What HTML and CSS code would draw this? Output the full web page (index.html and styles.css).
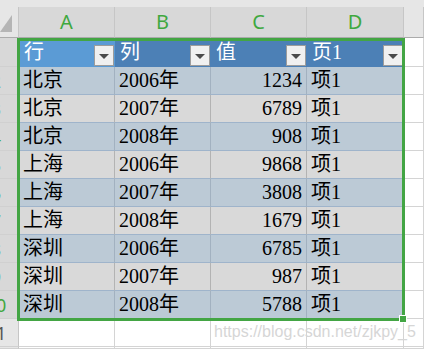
FILE: index.html
```html
<!DOCTYPE html>
<html lang="zh">
<head>
<meta charset="utf-8">
<link rel="stylesheet" href="styles.css">
</head>
<body>
<div class="sheet">
  <div class="topstrip"></div>

  <div class="corner"><svg class="corner-tri" width="13" height="26" viewBox="0 0 13 26"><polygon points="0,25 12,25 12,8" fill="#b5b5b5"/></svg></div>
  <div class="colhead sel">A</div>
  <div class="colhead sel">B</div>
  <div class="colhead sel">C</div>
  <div class="colhead sel">D</div>
  <div class="colhead"></div>

  <div class="rowhead sel"><span>1</span></div>
  <div class="th active"><span>行</span><i class="dd"></i></div>
  <div class="th"><span>列</span><i class="dd"></i></div>
  <div class="th"><span>值</span><i class="dd"></i></div>
  <div class="th"><span>页1</span><i class="dd"></i></div>
  <div class="ecell"></div>

  <div class="rowhead sel"><span>2</span></div>
  <div class="td band">北京</div><div class="td band">2006年</div><div class="td band num">1234</div><div class="td band">项1</div>
  <div class="ecell"></div>

  <div class="rowhead sel"><span>3</span></div>
  <div class="td">北京</div><div class="td">2007年</div><div class="td num">6789</div><div class="td">项1</div>
  <div class="ecell"></div>

  <div class="rowhead sel"><span>4</span></div>
  <div class="td band">北京</div><div class="td band">2008年</div><div class="td band num">908</div><div class="td band">项1</div>
  <div class="ecell"></div>

  <div class="rowhead sel"><span>5</span></div>
  <div class="td">上海</div><div class="td">2006年</div><div class="td num">9868</div><div class="td">项1</div>
  <div class="ecell"></div>

  <div class="rowhead sel"><span>6</span></div>
  <div class="td band">上海</div><div class="td band">2007年</div><div class="td band num">3808</div><div class="td band">项1</div>
  <div class="ecell"></div>

  <div class="rowhead sel"><span>7</span></div>
  <div class="td">上海</div><div class="td">2008年</div><div class="td num">1679</div><div class="td">项1</div>
  <div class="ecell"></div>

  <div class="rowhead sel"><span>8</span></div>
  <div class="td band">深圳</div><div class="td band">2006年</div><div class="td band num">6785</div><div class="td band">项1</div>
  <div class="ecell"></div>

  <div class="rowhead sel"><span>9</span></div>
  <div class="td">深圳</div><div class="td">2007年</div><div class="td num">987</div><div class="td">项1</div>
  <div class="ecell"></div>

  <div class="rowhead sel"><span>10</span></div>
  <div class="td band">深圳</div><div class="td band">2008年</div><div class="td band num">5788</div><div class="td band">项1</div>
  <div class="ecell"></div>

  <div class="rowhead"><span>11</span></div>
  <div class="ecell"></div><div class="ecell"></div><div class="ecell"></div><div class="ecell"></div><div class="ecell"></div>

  <div class="rowhead"></div>
  <div class="ecell"></div><div class="ecell"></div><div class="ecell"></div><div class="ecell"></div><div class="ecell"></div>

  <div class="selection"></div>
  <div class="handle"></div>
  <div class="watermark">https://blog.csdn.net/zjkpy_5</div>
</div>
</body>
</html>
```

FILE: styles.css
```css
* { box-sizing: border-box; }
html, body { margin: 0; padding: 0; background: #ffffff; }
body { width: 424px; height: 349px; overflow: hidden; }

.sheet {
  position: relative;
  width: 424px;
  height: 349px;
  display: grid;
  grid-template-columns: 19px 96px 96px 96px 97px 20px;
  grid-template-rows: 7px 31px 29px repeat(9, 28px) 28px 2px;
  overflow: hidden;
  font-family: "Liberation Serif", "Noto Sans CJK SC", serif;
}

.topstrip {
  grid-column: 1 / -1;
  background: #e6e6e6;
}

.corner {
  position: relative;
  background: #e6e6e6;
  border-right: 1px solid #c6c6c6;
  border-bottom: 1px solid #ababab;
}
.corner-tri { display: block; }

.colhead {
  background: #e6e6e6;
  border-right: 1px solid #c6c6c6;
  border-bottom: 1px solid #ababab;
  font-family: "Noto Sans", "Liberation Sans", sans-serif;
  font-size: 20px;
  line-height: 30px;
  text-align: center;
  color: #3fa83f;
}
.colhead.sel { background: #d8d8d8; }

.rowhead {
  overflow: hidden;
  background: #e6e6e6;
  border-right: 1px solid #c6c6c6;
  border-bottom: 1px solid #d0d0d0;
  font-family: "Noto Sans", "Liberation Sans", sans-serif;
  font-size: 18px;
  color: #555555;
  display: flex;
  align-items: center;
}
.rowhead span {
  flex: 0 0 40px;
  width: 40px;
  margin-left: -24px;
  text-align: center;
}
.rowhead.sel { background: #d8d8d8; color: #3fa83f; }

.th {
  background: #4c80b6;
  color: #ffffff;
  font-size: 20px;
  display: flex;
  justify-content: space-between;
  align-items: flex-end;
  padding-left: 5px;
  line-height: 26px;
  border-bottom: 1px solid #4c80b6;
}
.th.active { background: #5b9bd5; border-bottom-color: #5b9bd5; }
.th span { padding-bottom: 1px; }

.dd {
  flex: 0 0 20px;
  width: 20px;
  height: 21px;
  margin-right: 1px;
  margin-bottom: 0;
  background: #f0f0f0;
  border: 1px solid #9c9c9c;
  display: flex;
  align-items: center;
  justify-content: center;
}
.dd::after {
  content: "";
  width: 0;
  height: 0;
  border-left: 5px solid transparent;
  border-right: 5px solid transparent;
  border-top: 5px solid #4a4a4a;
  margin-top: 1px;
}

.td {
  background: #d9d9d9;
  color: #000000;
  font-size: 20px;
  line-height: 27px;
  padding-left: 4px;
  padding-right: 4px;
  border-right: 1px solid #b3b3b3;
  border-bottom: 1px solid #9fb4cb;
  white-space: nowrap;
  overflow: hidden;
}
.td.band { background: #bccad6; border-right-color: #a2b1c0; }
.td.num { text-align: right; }

.ecell {
  background: #ffffff;
  border-right: 1px solid #d4d4d4;
  border-bottom: 1px solid #d4d4d4;
}

.selection {
  position: absolute;
  left: 17px;
  top: 38px;
  width: 388px;
  height: 283px;
  border: 3px solid #43a544;
  pointer-events: none;
}
.handle {
  position: absolute;
  left: 400px;
  top: 316px;
  width: 6px;
  height: 6px;
  background: #43a544;
  outline: 1px solid #ffffff;
}

.watermark {
  position: absolute;
  left: 214px;
  top: 322px;
  font-family: "Liberation Sans", "Noto Sans", sans-serif;
  font-size: 16px;
  line-height: 20px;
  color: #d6d6d6;
  white-space: nowrap;
}
```
